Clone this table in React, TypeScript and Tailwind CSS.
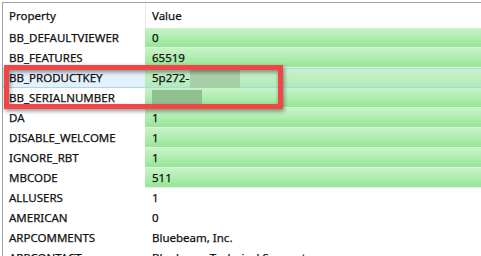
import React from "react";

type Row = { name: string; value: React.ReactNode; kind: "green" | "plain" | "selected" };

const rows: Row[] = [
  { name: "BB_DEFAULTVIEWER", value: "0", kind: "green" },
  { name: "BB_FEATURES", value: "65519", kind: "green" },
  {
    name: "BB_PRODUCTKEY",
    value: (
      <>
        <span className="align-middle">5p272-</span>
        <span className="ml-[1px] inline-block h-[19px] w-[50px] align-middle bg-[#a8cea8] blur-[0.6px]" />
      </>
    ),
    kind: "selected",
  },
  {
    name: "BB_SERIALNUMBER",
    value: <span className="inline-block h-[15px] w-[50px] align-middle bg-[#90bf90] blur-[0.6px]" />,
    kind: "green",
  },
  { name: "DA", value: "1", kind: "green" },
  { name: "DISABLE_WELCOME", value: "1", kind: "green" },
  { name: "IGNORE_RBT", value: "1", kind: "green" },
  { name: "MBCODE", value: "511", kind: "green" },
  { name: "ALLUSERS", value: "1", kind: "plain" },
  { name: "AMERICAN", value: "0", kind: "plain" },
  { name: "ARPCOMMENTS", value: "Bluebeam, Inc.", kind: "plain" },
  { name: "ARPCONTACT", value: "Bluebeam Technical Support", kind: "plain" },
];

function PropertyRow({ row }: { row: Row }) {
  const selected = row.kind === "selected";
  const green = row.kind !== "plain";
  return (
    <div className={`flex h-[20px] ${selected ? "border-y border-[#a9d6ee]" : ""}`}>
      <div
        className={`flex w-[142px] shrink-0 items-center pl-[6px] ${
          selected ? "bg-[#e4f1fb]" : ""
        }`}
      >
        {row.name}
      </div>
      <div
        className={`flex flex-1 items-center whitespace-nowrap pl-[7px] ${
          green
            ? selected
              ? "bg-[linear-gradient(#c9f1cd,#b2ebb6)]"
              : "border-b border-[#dcf6dc] bg-[linear-gradient(#c8f3c8,#97e697)]"
            : ""
        }`}
      >
        {row.value}
      </div>
    </div>
  );
}

export default function App() {
  return (
    <div
      className="relative h-[256px] w-[481px] overflow-hidden bg-white text-[11.5px] text-[#111] [-webkit-text-stroke:0.25px_#111]"
      style={{ fontFamily: '"Noto Sans", "Open Sans", sans-serif' }}
    >
      <div className="pl-[2px] pt-[2px]">
        <div className="border-l border-t border-[#a0a4a8]">
          <div className="flex h-[25px] items-center">
            <div className="flex h-full w-[142px] shrink-0 items-center pl-[6px]">Property</div>
            <div className="flex h-full flex-1 items-center border-l border-[#e8e8e8] pl-[6px]">Value</div>
          </div>
          {rows.map((r) => (
            <PropertyRow key={r.name} row={r} />
          ))}
        </div>
      </div>
      {/* highlight frame around the product key and serial number */}
      <div className="absolute left-[4px] top-[65px] h-[44px] w-[279px] border-[5px] border-[#f24646] [filter:drop-shadow(1px_2px_2px_rgba(0,0,0,0.45))]" />
    </div>
  );
}
